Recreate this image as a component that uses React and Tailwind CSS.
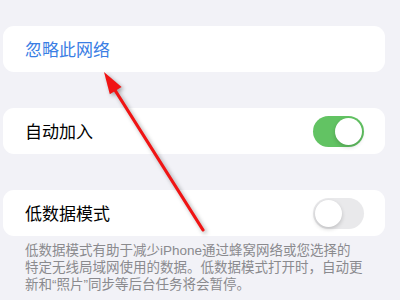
import React from 'react';

const Toggle = ({ on }) => (
    <div className={`relative w-[51px] h-[31px] rounded-full ${on ? 'bg-[#62c363]' : 'bg-[#e9e9eb]'}`}>
        <div
            className={`absolute top-[2px] w-[27px] h-[27px] rounded-full bg-white shadow-[0_2px_4px_rgba(0,0,0,0.18)] ${on ? 'left-[22px]' : 'left-[2px]'}`}
        />
    </div>
);

const Row = ({ children, right, className = '' }) => (
    <div className={`ml-[3px] w-[382px] h-[46px] bg-white rounded-[11px] flex items-center justify-between pl-[22px] pr-[21px] ${className}`}>
        {children}
        {right}
    </div>
);

const footerLines = [
    '低数据模式有助于减少iPhone通过蜂窝网络或您选择的',
    '特定无线局域网使用的数据。低数据模式打开时，自动更',
    '新和“照片”同步等后台任务将会暂停。',
];

const App = () => {
    return (
        <div
            className="relative w-[400px] h-[300px] bg-[#f2f2f7] overflow-hidden pt-[26px]"
            style={{ fontFamily: '"Noto Sans CJK SC", "Noto Sans", sans-serif' }}
        >
            <Row>
                <span className="text-[17px] text-[#3a7ee4]">忽略此网络</span>
            </Row>
            <Row className="mt-[36px]" right={<Toggle on />}>
                <span className="text-[17px] text-black">自动加入</span>
            </Row>
            <Row className="mt-[36px]" right={<Toggle on={false} />}>
                <span className="text-[17px] text-black">低数据模式</span>
            </Row>
            <div
                className="pl-[25px] mt-[6px] flex flex-col text-[13.5px] text-[#8a8a8e] whitespace-nowrap"
                style={{ fontFamily: '"Liberation Sans", "Noto Sans CJK SC", sans-serif' }}
            >
                {footerLines.map(line => (
                    <div key={line} className="h-[17px] leading-[17px]">{line}</div>
                ))}
            </div>

            {/* annotation arrow */}
            <svg
                className="absolute left-0 top-0 pointer-events-none"
                width="400"
                height="300"
                style={{ filter: 'drop-shadow(2px 2px 2px rgba(0,0,0,0.35))' }}
            >
                <line x1="203" y1="230" x2="113" y2="87" stroke="#f01414" strokeWidth="3.2" strokeLinecap="round" />
                <polygon points="104,72 121.6,86.9 109.8,94.3" fill="#f01414" />
            </svg>
        </div>
    );
};

export default App;
